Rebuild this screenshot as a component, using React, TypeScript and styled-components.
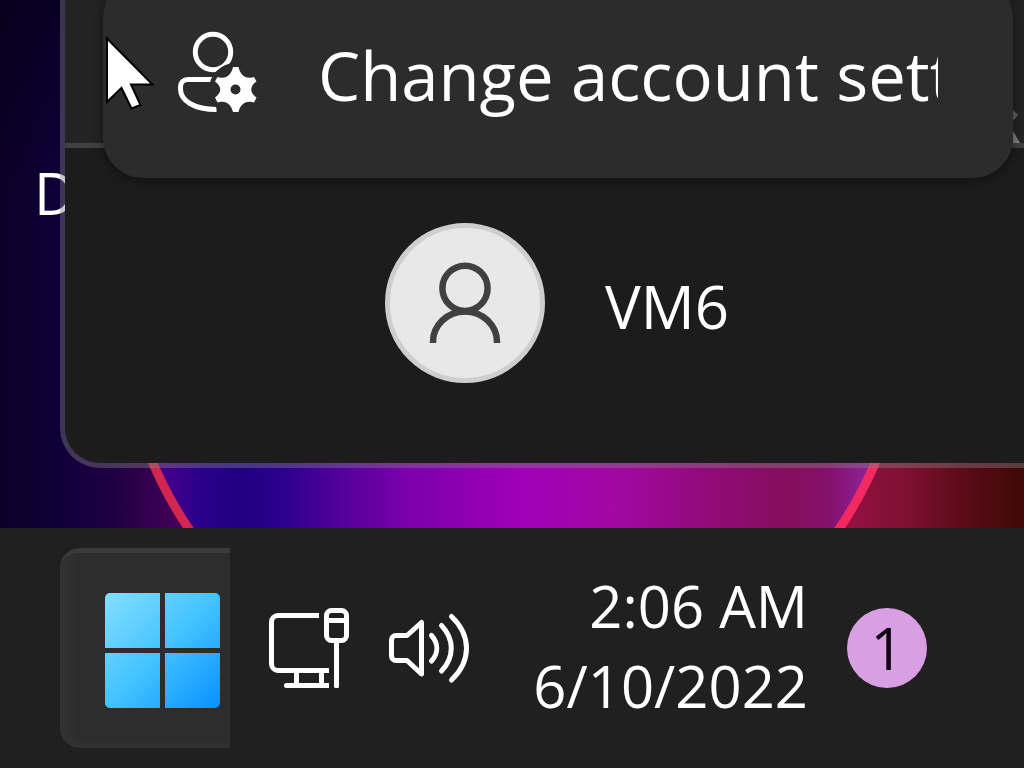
import React from "react";
import styled, { createGlobalStyle } from "styled-components";

const GlobalStyle = createGlobalStyle`
  * { box-sizing: border-box; }
  body {
    margin: 0;
    background: #202020;
    color: #ffffff;
    font-family: "Open Sans", "Noto Sans", sans-serif;
  }
  button {
    margin: 0;
    padding: 0;
    border: 0;
    background: none;
    color: inherit;
    font: inherit;
    text-align: left;
  }
  svg { display: block; flex: none; }
`;

const Screen = styled.div`
  display: flex;
  flex-direction: column;
  min-height: 100vh;
  overflow: hidden;
`;

const Desktop = styled.main`
  position: relative;
  flex: 1;
  display: flex;
  flex-direction: column;
  padding: 0 0 60px 60px;
  overflow: hidden;
  background: #0b0028;
`;

const Wallpaper = styled.svg`
  position: absolute;
  inset: 0;
  width: 100%;
  height: 100%;
`;

const Shortcut = styled.button`
  position: absolute;
  left: 34px;
  top: 153px;
  font-size: 58px;
  line-height: 80px;
`;

const StartPanel = styled.section`
  position: relative;
  flex: 1;
  display: flex;
  flex-direction: column;
  border: solid rgba(128, 128, 128, 0.42);
  border-width: 0 0 5px 5px;
  border-bottom-left-radius: 40px;
  background: #1c1c1c;
  background-clip: padding-box;
`;

const Pinned = styled.div`
  display: flex;
  flex: 1;
  min-height: 148px;
  align-items: flex-end;
  justify-content: flex-end;
  border-bottom: 5px solid #414141;
  background: #232323;
`;

const Footer = styled.footer`
  padding: 75px 0 80px 320px;
`;

const User = styled.button`
  display: flex;
  align-items: center;
  gap: 60px;
  font-size: 60px;
  line-height: 80px;
`;

const UserName = styled.span`
  padding-top: 6px;
`;

const Avatar = styled.span`
  display: grid;
  place-items: center;
  width: 160px;
  height: 160px;
  border: 5px solid #cecece;
  border-radius: 50%;
  background: #e8e8e8;
`;

const Menu = styled.div`
  position: absolute;
  top: -22px;
  left: 38px;
  right: 11px;
  border-radius: 40px;
  background: #2c2c2c;
  box-shadow: 0 2px 8px 2px rgba(0, 0, 0, 0.35);
`;

const MenuItem = styled.button`
  display: flex;
  align-items: center;
  gap: 60px;
  width: 100%;
  height: 200px;
  padding: 0 75px 8px;
  font-size: 67px;
  line-height: 100px;
`;

const MenuLabel = styled.span`
  flex: 1;
  min-width: 0;
  padding-top: 2px;
  overflow: hidden;
  white-space: nowrap;
`;

const Pointer = styled.svg`
  position: absolute;
  left: 104px;
  top: 34px;
`;

const Taskbar = styled.nav`
  display: flex;
  align-items: center;
  gap: 39px;
  padding: 20px 97px 20px 60px;
  background: #202020;
`;

const StartButton = styled.button`
  display: flex;
  align-items: center;
  justify-content: flex-end;
  width: 170px;
  height: 200px;
  padding: 5px 10px 0 0;
  border-top: 5px solid #3a3a3a;
  border-bottom: 5px solid #313131;
  border-radius: 20px 0 0 20px;
  background: linear-gradient(90deg, #323232, #2d2d2d 20px);
`;

const TrayButton = styled.button`
  width: 80px;
  height: 80px;
`;

const Clock = styled.button`
  display: flex;
  flex-direction: column;
  margin-left: auto;
  padding-bottom: 4px;
  font-size: 58px;
  line-height: 80px;
  text-align: right;
  white-space: nowrap;
`;

const Badge = styled.button`
  width: 80px;
  height: 80px;
  border-radius: 50%;
  background: #d99fe3;
  color: #0d000f;
  font-size: 58px;
  line-height: 80px;
  text-align: center;
`;

function WallpaperArt() {
  return (
    <Wallpaper viewBox="0 0 1024 528" preserveAspectRatio="none" aria-hidden="true">
      <defs>
        <linearGradient id="outer" gradientUnits="userSpaceOnUse" x1="0" y1="0" x2="1024" y2="0">
          <stop offset="0" stopColor="#0c0026" />
          <stop offset="0.06" stopColor="#10003a" />
          <stop offset="0.11" stopColor="#1e0042" />
          <stop offset="0.17" stopColor="#420056" />
          <stop offset="0.83" stopColor="#931243" />
          <stop offset="0.89" stopColor="#7c1030" />
          <stop offset="0.94" stopColor="#5c0c18" />
          <stop offset="1" stopColor="#3e0907" />
        </linearGradient>
        <linearGradient id="orb" gradientUnits="userSpaceOnUse" x1="0" y1="0" x2="1024" y2="0">
          <stop offset="0.15" stopColor="#4c0088" />
          <stop offset="0.2" stopColor="#28008a" />
          <stop offset="0.24" stopColor="#210080" />
          <stop offset="0.28" stopColor="#2e0090" />
          <stop offset="0.34" stopColor="#58009c" />
          <stop offset="0.4" stopColor="#7c00ac" />
          <stop offset="0.51" stopColor="#a000b8" />
          <stop offset="0.6" stopColor="#a208a2" />
          <stop offset="0.67" stopColor="#950a82" />
          <stop offset="0.77" stopColor="#850e5c" />
          <stop offset="0.81" stopColor="#85106c" />
          <stop offset="0.84" stopColor="#8c2090" />
        </linearGradient>
        <linearGradient id="rim" gradientUnits="userSpaceOnUse" x1="120" y1="0" x2="900" y2="0">
          <stop offset="0" stopColor="#d0264f" />
          <stop offset="1" stopColor="#f52a62" />
        </linearGradient>
        <linearGradient id="shade" x1="0" y1="0" x2="0" y2="1">
          <stop offset="0" stopColor="#000010" stopOpacity="0.5" />
          <stop offset="0.35" stopColor="#000010" stopOpacity="0" />
        </linearGradient>
      </defs>
      <rect width="1024" height="528" fill="url(#outer)" />
      <rect width="1024" height="528" fill="url(#shade)" />
      <circle cx="514" cy="308" r="393" fill="url(#orb)" stroke="url(#rim)" strokeWidth="9" />
    </Wallpaper>
  );
}

function AccountSettingsIcon() {
  return (
    <svg width="80" height="86" viewBox="178 31 80 86" aria-hidden="true">
      <circle cx="213" cy="52" r="17.7" fill="none" stroke="#fff" strokeWidth="5" />
      <path d="M214 79.500H188c-4.500 0-7.500 3-7.500 7.500v2c0 12 14 20.500 36 20.500" fill="none" stroke="#fff" strokeWidth="5" />
      <circle cx="235.500" cy="89.500" r="26.500" fill="#2c2c2c" />
      <path
        fill="#fff"
        fillRule="evenodd"
        d="M233 67h5.500c1.500 7 6 12 13.500 10.500l2-.5 2.500 4.500c-7 5-7 11 0 16l-2.500 5-2-.5c-7.500-1.500-12 3.500-13.500 10H233c-1.500-6.500-6-11.500-13.500-10l-2 .5-2.500-5c7-5 7-11 0-16l2.500-4.500 2 .5c7.500 1.500 12-3.500 13.500-10.500zM235.500 84.500a5 5 0 1 0 0 10 5 5 0 0 0 0-10z"
      />
    </svg>
  );
}

function PersonIcon() {
  return (
    <svg width="80" height="82" viewBox="425 262 80 82" fill="none" stroke="#404040" strokeWidth="6.500" aria-hidden="true">
      <circle cx="465" cy="288.300" r="22.600" />
      <path d="M433 343v-1a32 30.500 0 0 1 64 0v1" />
    </svg>
  );
}

function WindowsLogo() {
  return (
    <svg width="115" height="115" viewBox="0 0 115 115" aria-hidden="true">
      <defs>
        <linearGradient id="logo" gradientUnits="userSpaceOnUse" x1="0" y1="0" x2="115" y2="115">
          <stop offset="0" stopColor="#84dfff" />
          <stop offset="0.5" stopColor="#43c3ff" />
          <stop offset="1" stopColor="#0891ff" />
        </linearGradient>
      </defs>
      <path
        fill="url(#logo)"
        d="M5 0h50v55H0V5a5 5 0 0 1 5-5zM60 0h50a5 5 0 0 1 5 5v50H60zM0 60h55v55H5a5 5 0 0 1-5-5zM60 60h55v50a5 5 0 0 1-5 5H60z"
      />
    </svg>
  );
}

function NetworkIcon() {
  return (
    <svg width="80" height="80" viewBox="269 608 80 80" fill="none" stroke="#fff" strokeWidth="5" aria-hidden="true">
      <path d="M319 615.500H278a6.500 6.500 0 0 0-6.500 6.500v42a6.500 6.500 0 0 0 6.500 6.500h51" />
      <path d="M296.500 671v14M321.500 671v14" />
      <path d="M329 685.500h-42.500" />
      <path d="M286.500 685.500h1M336.500 685v1" strokeLinecap="round" />
      <rect x="326.500" y="610.500" width="20" height="30" rx="5" />
      <path d="M326 620.500h21M336.500 641v45" />
    </svg>
  );
}

function VolumeIcon() {
  return (
    <svg
      width="80"
      height="80"
      viewBox="388 608 80 80"
      fill="none"
      stroke="#fff"
      strokeWidth="5"
      strokeLinecap="round"
      strokeLinejoin="round"
      overflow="visible"
      aria-hidden="true"
    >
      <path d="M421.500 622.500v51.500l-14.500-13.500h-11a4.500 4.500 0 0 1-4.500-4.500v-16a4.500 4.500 0 0 1 4.500-4.500h11z" />
      <path d="M431.500 635.500c7 8 7 17.500 0 25.500M441.500 625.500c13 13.500 13 32 0 45.500M451.500 616.500c20 19 20 44.500 0 63.500" />
    </svg>
  );
}

function PinnedIcon() {
  return (
    <svg width="11" height="34" viewBox="0 0 11 34" aria-hidden="true">
      <path d="M0 1l5 5-5 6z" fill="#626262" />
      <path d="M0 22l7 12H0z" fill="#808080" />
    </svg>
  );
}

export default function App() {
  return (
    <Screen>
      <GlobalStyle />
      <Desktop>
        <WallpaperArt />
        <Shortcut type="button">D</Shortcut>
        <StartPanel aria-label="Start">
          <Pinned>
            <PinnedIcon />
          </Pinned>
          <Footer>
            <User type="button">
              <Avatar>
                <PersonIcon />
              </Avatar>
              <UserName>VM6</UserName>
            </User>
          </Footer>
          <Menu role="menu">
            <MenuItem type="button" role="menuitem">
              <AccountSettingsIcon />
              <MenuLabel>Change account settings</MenuLabel>
            </MenuItem>
          </Menu>
        </StartPanel>
        <Pointer width="52" height="80" viewBox="104 34 52 80" aria-hidden="true">
          <path
            d="M107 38.500v63.500l14.500-14 10 20.500 9-3.500-9.500-20.500h21.500z"
            fill="#fff"
            stroke="#000"
            strokeWidth="2"
          />
        </Pointer>
      </Desktop>
      <Taskbar aria-label="Taskbar">
        <StartButton type="button" aria-label="Start">
          <WindowsLogo />
        </StartButton>
        <TrayButton type="button" aria-label="Network">
          <NetworkIcon />
        </TrayButton>
        <TrayButton type="button" aria-label="Volume">
          <VolumeIcon />
        </TrayButton>
        <Clock type="button">
          <span>2:06 AM</span>
          <span>6/10/2022</span>
        </Clock>
        <Badge type="button" aria-label="1 notification">1</Badge>
      </Taskbar>
    </Screen>
  );
}
